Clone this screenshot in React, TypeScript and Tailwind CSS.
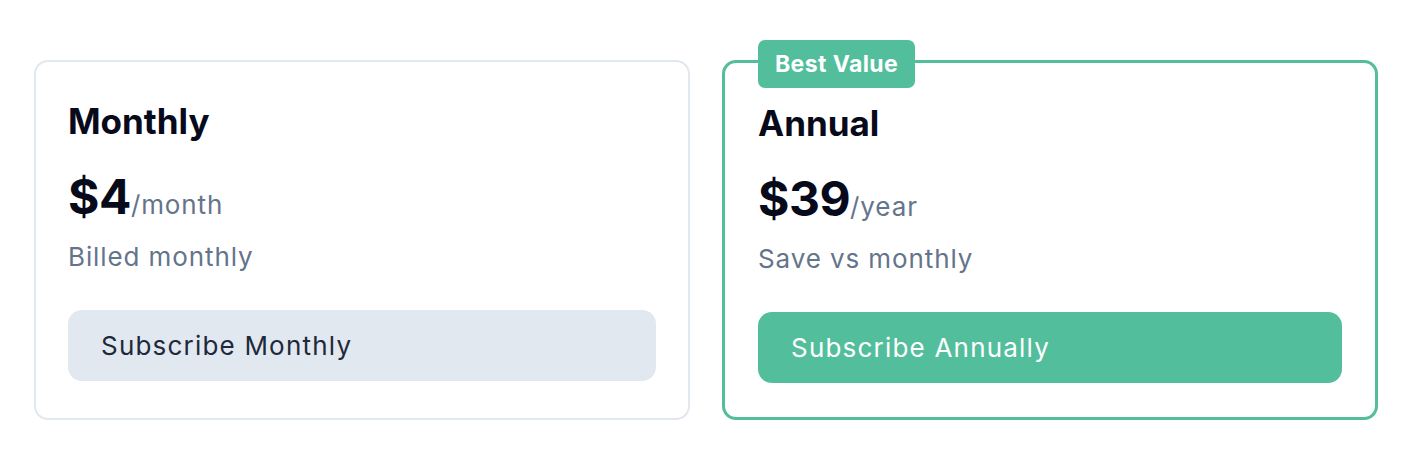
const plans = [
  {
    name: "Monthly",
    price: "$4",
    unit: "/month",
    note: "Billed monthly",
    cta: "Subscribe Monthly",
    featured: false,
  },
  {
    name: "Annual",
    price: "$39",
    unit: "/year",
    note: "Save vs monthly",
    cta: "Subscribe Annually",
    featured: true,
  },
];

export default function App() {
  return (
    <div
      className="min-h-[474px] w-full bg-white pl-[34px] pt-[60px]"
      style={{ fontFamily: "Inter, 'Noto Sans', sans-serif" }}
    >
      <div className="flex gap-[32px]">
        {plans.map((plan) => (
          <div
            key={plan.name}
            className={
              plan.featured
                ? "relative flex w-[656px] flex-col rounded-[14px] border-[3px] border-[#52be9c] bg-white px-[33px] pt-[38px] pb-[34px]"
                : "relative flex w-[656px] flex-col rounded-[14px] border-2 border-[#e2e8f0] bg-white px-[32px] pt-[37px] pb-[36px]"
            }
          >
            {plan.featured && (
              <span className="absolute left-[33px] top-[-23px] flex h-[48px] items-center rounded-[7px] bg-[#52be9c] px-[17px] text-[23px] font-bold tracking-[0.4px] text-white">
                Best Value
              </span>
            )}

            <h3 className="text-[35px] font-bold leading-[44px] text-[#060a1a]">
              {plan.name}
            </h3>

            <div className="mt-[26px] flex items-baseline">
              <span className="text-[48px] font-bold leading-[56px] tracking-[-0.5px] text-[#060a1a]">
                {plan.price}
              </span>
              <span className="text-[26px] tracking-[0.9px] text-[#64748b]">{plan.unit}</span>
            </div>

            <p className="mt-[16px] text-[26px] leading-[32px] tracking-[0.9px] text-[#64748b]">
              {plan.note}
            </p>

            <button
              className={
                plan.featured
                  ? "mt-[37px] flex h-[71px] items-center rounded-[14px] bg-[#52be9c] px-[33px] text-left text-[26px] tracking-[1.2px] text-white"
                  : "mt-[37px] flex h-[71px] items-center rounded-[14px] bg-[#e2e8f0] px-[33px] text-left text-[26px] tracking-[1.2px] text-[#1e293b]"
              }
            >
              {plan.cta}
            </button>
          </div>
        ))}
      </div>
    </div>
  );
}
